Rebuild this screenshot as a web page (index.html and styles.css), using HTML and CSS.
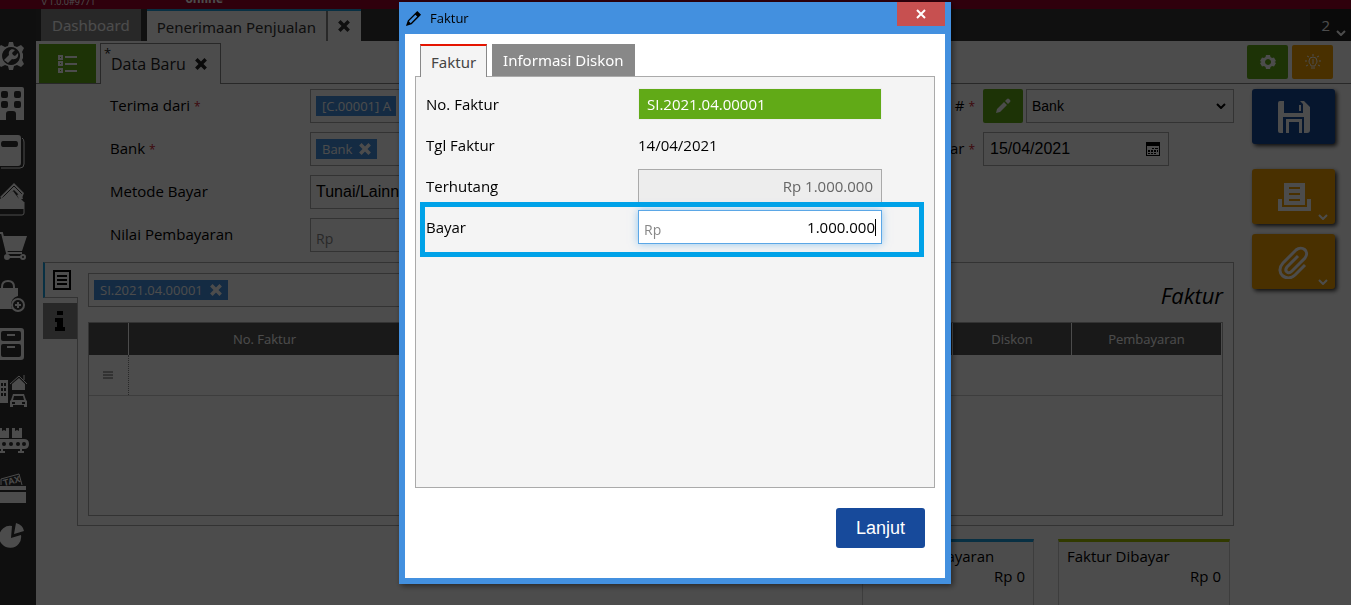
FILE: index.html
```html
<!DOCTYPE html>
<html lang="id">
<head>
    <meta charset="UTF-8">
    <meta name="viewport" content="width=device-width, initial-scale=1.0">
    <title>Penerimaan Penjualan</title>
    <link rel="stylesheet" href="styles.css">
</head>
<body>
    <div class="app">
        <header class="topbar">
            <span class="version">v 1.0.0#9771</span>
            <span class="status">online</span>
        </header>

        <div class="workspace">
            <nav class="sidebar">
                <a href="#" aria-label="Pengaturan"><svg viewBox="0 0 36 48"><path fill-rule="evenodd" d="M9 10h4l1 4 3 1 4-2 3 3-2 4 1 2v4l-1 2 2 4-3 3-4-2-3 1-1 4H9l-1-4-3-1-4 2-3-3 2-4-1-2v-4l1-2-2-4 3-3 4 2 3-1zM11 15a9 9 0 1 0 .1 0z"/><path d="M4 28l5-5c-1-4 2-7 6-5l-3 3 1 2 2 1 3-3c1 4-2 7-6 6l-4 4z"/></svg></a>
                <a href="#" aria-label="Perusahaan"><svg viewBox="0 0 36 48"><path fill-rule="evenodd" d="M-4 7h26q2 0 2 2v31h-8v-6q0-3-3-3H9q-3 0-3 3v6H-4zM3 11q-2 0-2 2v3q0 2 2 2h3q2 0 2-2v-3q0-2-2-2zm13 0q-2 0-2 2v3q0 2 2 2h3q2 0 2-2v-3q0-2-2-2zM3 21q-2 0-2 2v3q0 2 2 2h3q2 0 2-2v-3q0-2-2-2zm13 0q-2 0-2 2v3q0 2 2 2h3q2 0 2-2v-3q0-2-2-2z"/></svg></a>
                <a href="#" aria-label="Buku Besar"><svg viewBox="0 0 36 48"><path fill-rule="evenodd" d="M-3 7h21q3 0 3 3v25q0 3-3 3H-3zM3 13q-2 0-2 3t2 3h13q2 0 2-3t-2-3z"/><path class="line thin" d="M22 10q2 1 2 4v22q0 4-4 4H1"/></svg></a>
                <a href="#" aria-label="Kas dan Bank"><svg viewBox="0 0 36 48"><path d="M0 21L14 7l10 10-2 5-8-8-11 9z"/><path class="line cut" d="M2 22L14 10l8 8"/><path d="M0 23l13-8 6 8zM17 19l4-2 2 6h-4zM-2 23h23l3 3v7H-2z"/><path class="line thin" d="M-2 39h24q2 0 2-2V26"/></svg></a>
                <a href="#" aria-label="Penjualan"><svg viewBox="0 0 36 48"><path d="M3 12h24l-5 15H6z"/><path class="line" d="M-2 9h4l5 20h15M5 33h16"/><circle class="line" cx="7" cy="33" r="2"/><circle class="line" cx="23" cy="33" r="2"/></svg></a>
                <a href="#" aria-label="Pembelian"><svg viewBox="0 0 36 48"><path d="M-3 16h21v8q-7 2-7 9 0 2 1 4H-3z"/><path class="line" d="M2 18v-3q0-6 6-6t6 6v3"/><circle class="line" cx="18" cy="33" r="6"/><path class="line" d="M18 30v6M15 33h6"/></svg></a>
                <a href="#" aria-label="Persediaan"><svg viewBox="0 0 36 48"><path fill-rule="evenodd" d="M-3 8h24q3 0 3 3v26q0 3-3 3H-3zM3 11q-2 0-2 2v6q0 2 2 2h16q2 0 2-2v-6q0-2-2-2zM3 24q-2 0-2 2v9q0 2 2 2h16q2 0 2-2v-9q0-2-2-2z"/><path d="M7 14h8v2H7zM7 26h8v2H7z"/></svg></a>
                <a href="#" aria-label="Aset Tetap"><svg viewBox="0 0 36 48"><path fill-rule="evenodd" d="M-2 12h10v23H-2zM1 15v3h2v-3zm3 0v3h2v-3zm-3 5v3h2v-3zm3 0v3h2v-3zm-3 5v3h2v-3zm3 0v3h2v-3z"/><path class="line thin" d="M10 16l9-8 8 8M24 12V7"/><path d="M12 16l7-6 6 6v6H12z"/><path fill-rule="evenodd" d="M13 26h11l2 6 1 1v6h-3v-2H13v2h-3v-6l1-1zM14 28l-1 4h11l-1-4zM12 34v2h3v-2zm10 0v2h3v-2z"/></svg></a>
                <a href="#" aria-label="Manufaktur"><svg viewBox="0 0 36 48"><path d="M-2 12h4v3l2-1 2 1v-3h3v10H-2zM12 12h3v3l2-1 2 1v-3h3v10H12zM0 23h24q5 0 5 5t-5 5H0z"/><g class="hole"><circle cx="4" cy="28" r="2"/><circle cx="11" cy="28" r="2"/><circle cx="18" cy="28" r="2"/><circle cx="24" cy="28" r="2"/></g><path d="M1 33h2v3H1zM20 33h2v3h-2zM-1 35h6v2h-6zM18 35h6v2h-6z"/></svg></a>
                <a href="#" aria-label="Pajak"><svg viewBox="0 0 36 48"><path class="line thin" d="M1 21v-6L19 10l3 11"/><text class="tax" x="4" y="22" transform="rotate(-14 4 22)">TAX</text><path d="M0 22h26v4H0zM0 28h26v11H0z"/></svg></a>
                <a href="#" aria-label="Laporan"><svg viewBox="0 0 36 48"><path d="M12 14l-1 12 10-3a11 11 0 1 1-9-9zM16 11q7 2 8 8l-10 3z"/></svg></a>
            </nav>

            <main class="main">
                <div class="tab-strip">
                    <a class="page-tab" href="#">Dashboard</a>
                    <div class="page-tab active">
                        <a href="#">Penerimaan Penjualan</a>
                        <button class="tab-close" aria-label="Tutup tab"><svg class="cross" viewBox="0 0 12 12"><path d="M2 2l8 8M10 2l-8 8"/></svg></button>
                    </div>
                    <button class="tab-count">2 <svg viewBox="0 0 10 6"><path d="M1 1l4 4 4-4"/></svg></button>
                </div>

                <div class="doc-bar">
                    <button class="btn-list" aria-label="Daftar"><svg viewBox="0 0 20 20"><path d="M1 2h3v3H1zM1 8h3v3H1zM1 15h3v3H1zM7 3h12M7 10h12M7 17h12"/></svg></button>
                    <div class="doc-tab">
                        <span class="dirty">*</span>Data Baru
                        <button aria-label="Tutup data"><svg class="cross" viewBox="0 0 12 12"><path d="M2 2l8 8M10 2l-8 8"/></svg></button>
                    </div>
                    <div class="doc-tools">
                        <button class="btn-green" aria-label="Setelan"><svg viewBox="0 0 16 16"><path fill-rule="evenodd" d="M6 1h4l.5 2 1.500 1 2-.5 2 3.500-1.500 1 1.500 1-2 3.500-2-.5-1.500 1-.5 2H6l-.5-2L4 12l-2 .5L0 9l1.500-1L0 7l2-3.500L4 4l1.500-1zM8 5a3 3 0 1 0 .1 0z"/></svg></button>
                        <button class="btn-orange" aria-label="Petunjuk"><svg class="bulb" viewBox="0 0 16 16"><path d="M6 12c0-2-2-2-2-5a4 4 0 0 1 8 0c0 3-2 3-2 5zM6 14h4M8 5v5M8 0v2M0 7h2M14 7h2M2 2l2 1M14 2l-2 1M1 12l2-1M15 12l-2-1"/></svg></button>
                    </div>
                </div>

                <div class="content">
                    <div class="document">
                        <form class="form">
                            <div class="form-col form-left">
                                <span class="label">Terima dari <i>*</i></span>
                                <div class="field"><span class="chip">[C.00001] A</span></div>
                                <span class="label">Bank <i>*</i></span>
                                <div class="field"><span class="chip">Bank <svg class="cross" viewBox="0 0 12 12"><path d="M2 2l8 8M10 2l-8 8"/></svg></span></div>
                                <label class="label" for="metode">Metode Bayar</label>
                                <select class="field plain" id="metode"><option>Tunai/Lainnya</option></select>
                                <label class="label" for="nilai">Nilai Pembayaran</label>
                                <input class="field amount" id="nilai" type="text" placeholder="Rp">
                            </div>
                            <div class="form-col form-right">
                                <label class="label" for="nomor">No. Bukti # <i>*</i></label>
                                <div class="number">
                                    <button class="btn-green" type="button" aria-label="Ubah nomor"><svg viewBox="0 0 16 16"><path d="M1 15l1-4 7-7 3 3-7 7zM10 3l2-2q1-1 2 0l1 1q1 1 0 2l-2 2z"/></svg></button>
                                    <div class="select-wrap">
                                        <select class="field" id="nomor"><option>Bank</option></select>
                                        <svg viewBox="0 0 10 6"><path d="M1 1l4 4 4-4"/></svg>
                                    </div>
                                </div>
                                <label class="label" for="tanggal">Tgl Bayar <i>*</i></label>
                                <div class="field date">
                                    <input id="tanggal" type="text" value="15/04/2021">
                                    <svg viewBox="0 0 14 14"><path fill-rule="evenodd" d="M0 0h14v14H0zM1 4v9h12V4z"/><path d="M6 6h2v1H6zM9 6h3v1H9zM2 8h2v2H2zM5 8h2v2H5zM8 8h2v2H8zM11 8h1v2h-1zM2 11h2v1H2zM5 11h2v1H5zM8 11h2v1H8z"/></svg>
                                </div>
                            </div>
                        </form>

                        <div class="detail">
                            <div class="side-tabs">
                                <button class="side-tab active" aria-label="Rincian"><svg viewBox="0 0 18 20"><path d="M1 1h16v18H1zM4 6h10M4 10h10M4 14h10"/></svg></button>
                                <button class="side-tab" aria-label="Info"><svg class="info" viewBox="0 0 10 20"><path d="M2 0h6v4H2zM0 7h8v9h2v4H0v-4h2v-5H0z"/></svg></button>
                            </div>
                            <section class="panel">
                                <div class="panel-head">
                                    <div class="field"><span class="chip">SI.2021.04.00001 <svg class="cross" viewBox="0 0 12 12"><path d="M2 2l8 8M10 2l-8 8"/></svg></span></div>
                                    <h2>Faktur</h2>
                                </div>
                                <div class="table-box">
                                    <table>
                                        <thead>
                                            <tr><th class="col-grip"></th><th class="col-no">No. Faktur</th><th>Terhutang</th><th class="col-disc">Diskon</th><th class="col-pay">Pembayaran</th></tr>
                                        </thead>
                                        <tbody>
                                            <tr><td><svg class="grip" viewBox="0 0 10 8"><path d="M0 1h10M0 4h10M0 7h10"/></svg></td><td></td><td></td><td></td><td></td></tr>
                                        </tbody>
                                    </table>
                                </div>
                            </section>
                        </div>

                        <div class="totals">
                            <div class="total-card"><span>Nilai Pembayaran</span><b>Rp 0</b></div>
                            <div class="total-card paid"><span>Faktur Dibayar</span><b>Rp 0</b></div>
                        </div>
                    </div>

                    <aside class="actions">
                        <button class="action save" aria-label="Simpan"><svg viewBox="0 0 34 34"><path fill-rule="evenodd" d="M3 1h24l6 6v23q0 3-3 3H3q-2 0-2-2V3q0-2 2-2zM7 1v12h19V4l-3-3zM6 17v16h21V17z"/><path d="M22 5h2v6h-2zM9 19h16v14h-3V22H12v11H9z"/></svg></button>
                        <button class="action" aria-label="Cetak"><svg viewBox="0 0 34 34"><path fill-rule="evenodd" d="M7 3h21v22H7zM12 7v2h11V7zm0 6v2h11v-2zm0 6v2h11v-2zM1 19h4v8h25v-8h4v12H1z"/></svg><svg class="more" viewBox="0 0 10 6"><path d="M1 1l4 4 4-4"/></svg></button>
                        <button class="action" aria-label="Lampiran"><svg class="clip" viewBox="0 0 34 34"><path d="M21 11L10 22c-3 4 1 8 5 4l13-13c5-7-3-13-9-8L6 18c-9 10 4 20 12 12l10-10"/></svg><svg class="more" viewBox="0 0 10 6"><path d="M1 1l4 4 4-4"/></svg></button>
                    </aside>
                </div>
            </main>
        </div>
    </div>

    <div class="overlay">
        <div class="dialog" role="dialog" aria-labelledby="dialog-title">
            <div class="dialog-head">
                <svg viewBox="0 0 18 18"><path fill-rule="evenodd" d="M1 17l2-6 10-10 4 4-10 10zM4 12l2 2 7-7-2-2z"/></svg>
                <span id="dialog-title">Faktur</span>
                <button class="dialog-close" aria-label="Tutup"><svg viewBox="0 0 12 12"><path d="M2 2l8 8M10 2l-8 8"/></svg></button>
            </div>
            <div class="dialog-body">
                <div class="dialog-tabs">
                    <button class="active">Faktur</button>
                    <button>Informasi Diskon</button>
                </div>
                <div class="dialog-panel">
                    <div class="row"><span>No. Faktur</span><a class="invoice" href="#">SI.2021.04.00001</a></div>
                    <div class="row"><span>Tgl Faktur</span><span>14/04/2021</span></div>
                    <div class="row"><label for="terhutang">Terhutang</label><input id="terhutang" type="text" value="Rp 1.000.000" disabled></div>
                    <div class="row focus-row">
                        <label for="bayar">Bayar</label>
                        <div class="money"><span>Rp</span><input id="bayar" type="text" value="1.000.000"><i class="caret"></i></div>
                        <div class="highlight"></div>
                    </div>
                </div>
                <div class="dialog-foot"><button class="btn-next">Lanjut</button></div>
            </div>
        </div>
    </div>
</body>
</html>
```

FILE: styles.css
```css
* {
    margin: 0;
    padding: 0;
    box-sizing: border-box;
}

body {
    height: 100vh;
    overflow: hidden;
    background-color: #fff;
    color: #000;
    font-family: "Open Sans", "Noto Sans", sans-serif;
    font-size: 15px;
    line-height: 20px;
}

button, input, select {
    font: inherit;
    color: inherit;
    border: none;
    border-radius: 0;
    background: none;
    outline: none;
}

select {
    appearance: none;
}

a {
    color: inherit;
    text-decoration: none;
}

svg {
    display: block;
    fill: currentColor;
}

.app {
    height: 100vh;
    display: flex;
    flex-direction: column;
    overflow: hidden;
}

.topbar {
    flex: none;
    height: 9px;
    display: flex;
    align-items: flex-end;
    gap: 90px;
    padding-left: 42px;
    overflow: hidden;
    background-color: #9d0028;
    color: #fff;
    font-size: 9px;
    line-height: 14px;
}

.status {
    font-size: 12px;
    font-weight: bold;
    line-height: 20px;
}

.workspace {
    flex: 1;
    display: flex;
    min-height: 0;
}

.sidebar {
    flex: none;
    width: 36px;
    padding-top: 23px;
    overflow: hidden;
    background-color: #333;
    color: #fff;
}

.sidebar svg {
    width: 36px;
    height: 48px;
}

.sidebar .line {
    fill: none;
    stroke: currentColor;
    stroke-width: 2;
}

.sidebar .thin {
    stroke-width: 1;
}

.sidebar .cut {
    stroke: #333;
    stroke-width: 1;
}

.sidebar .hole {
    fill: #333;
}

.sidebar .tax {
    font-family: "Liberation Sans", Arial, sans-serif;
    font-size: 9px;
    font-weight: bold;
}

.main {
    flex: 1;
    min-width: 0;
}

/* tabs */
.tab-strip {
    display: flex;
    height: 32px;
    padding-left: 5px;
    gap: 6px;
    background-color: #363636;
}

.page-tab {
    padding: 0 11px;
    font-family: "Noto Sans", sans-serif;
    line-height: 32px;
    background-color: #888;
    color: #fff;
}

.page-tab.active {
    display: flex;
    padding: 0;
    border-top: 2px solid #1ba1e2;
    background-color: #fff;
    color: #333;
}

.page-tab.active a {
    padding: 0 10px;
    border-right: 2px solid #888;
}

.tab-close {
    width: 33px;
    display: grid;
    place-items: center;
}

.cross {
    width: 14px;
    height: 14px;
    fill: none;
    stroke: currentColor;
    stroke-width: 3;
}

.tab-count {
    display: flex;
    align-items: center;
    justify-content: flex-end;
    gap: 6px;
    width: 41px;
    margin-left: auto;
    padding-right: 5px;
    background-color: #222;
    color: #fff;
}

.tab-count svg, .more {
    width: 10px;
    height: 6px;
    fill: none;
    stroke: currentColor;
    stroke-width: 2;
}

.tab-count svg {
    margin-top: 16px;
}

.doc-bar {
    display: flex;
    height: 43px;
    padding: 2px 18px 0 3px;
    border-bottom: 1px solid #888;
}

.btn-list {
    width: 57px;
    margin-top: 1px;
    display: grid;
    place-items: center;
    background-color: #61aa17;
    color: #fff;
}

.btn-list svg {
    width: 20px;
    height: 20px;
    fill: none;
    stroke: currentColor;
    stroke-width: 2;
}

.doc-tab {
    display: flex;
    align-items: center;
    gap: 8px;
    height: 41px;
    margin-left: 4px;
    padding: 0 12px 0 10px;
    position: relative;
    border: 1px solid #888;
    border-bottom: none;
    background-color: #fff;
    color: #222;
    font-size: 16px;
}

.dirty {
    position: absolute;
    left: 3px;
    top: 2px;
    font-size: 13px;
    line-height: 14px;
}

.doc-tools {
    display: flex;
    gap: 4px;
    margin: 2px 0 4px auto;
}

.doc-tools button {
    width: 41px;
}

.btn-green, .btn-orange {
    display: grid;
    place-items: center;
    border-radius: 2px;
    background-color: #61aa17;
    color: #fff;
}

.btn-orange {
    background-color: #f5a200;
}

.btn-green svg, .btn-orange svg {
    width: 16px;
    height: 16px;
}

.btn-orange .bulb {
    fill: none;
    stroke: currentColor;
}

/* document */
.content {
    display: flex;
    gap: 18px;
    padding: 5px 16px 0 0;
}

.document {
    flex: 1;
    min-width: 0;
}

.form {
    display: flex;
    justify-content: space-between;
    padding-left: 74px;
}

.form-col {
    display: grid;
    grid-auto-rows: 34px;
    gap: 9px 0;
    align-content: start;
}

.form-left {
    grid-template-columns: 200px 280px;
}

.form-right {
    grid-template-columns: auto 251px;
    column-gap: 8px;
}

.label {
    line-height: 33px;
}

.form-right .label {
    text-align: right;
}

.label i {
    color: #d02030;
    font-style: normal;
    font-size: 12px;
}

.field {
    display: flex;
    align-items: center;
    height: 34px;
    padding: 0 5px;
    border: 1px solid #aaa;
}

.chip {
    display: flex;
    align-items: center;
    gap: 6px;
    height: 20px;
    padding: 0 5px 0 6px;
    background-color: #4390df;
    color: #fff;
    font-size: 13px;
}

.field.plain {
    font-family: "Liberation Sans", Arial, sans-serif;
    font-size: 16px;
}

.amount {
    padding-top: 6px;
    font-size: 14px;
}

.amount::placeholder {
    color: #888;
}

.number {
    display: flex;
    gap: 3px;
}

.number .btn-green {
    width: 40px;
}

.select-wrap {
    flex: 1;
    position: relative;
}

.select-wrap select {
    width: 100%;
    font-family: "Liberation Sans", Arial, sans-serif;
    font-size: 14px;
}

.select-wrap svg {
    position: absolute;
    right: 8px;
    top: 14px;
    width: 10px;
    height: 6px;
    fill: none;
    stroke: currentColor;
    stroke-width: 2;
}

.date {
    width: 186px;
    padding: 0 8px 0 6px;
}

.date input {
    flex: 1;
    min-width: 0;
    font-family: "Liberation Sans", Arial, sans-serif;
    font-size: 16px;
}

.date svg {
    width: 14px;
    height: 14px;
}

.detail {
    display: flex;
    margin-top: 10px;
    padding-left: 7px;
}

.side-tabs {
    width: 34px;
    display: flex;
    flex-direction: column;
    gap: 5px;
}

.side-tab {
    height: 36px;
    display: grid;
    place-items: center;
    background-color: #888;
}

.side-tab.active {
    position: relative;
    margin-right: -1px;
    border: 1px solid #aaa;
    border-left: 2px solid #1ba1e2;
    border-right: none;
    background-color: #fff;
}

.side-tab svg {
    width: 18px;
    height: 20px;
    fill: none;
    stroke: currentColor;
    stroke-width: 2;
}

.side-tab .info {
    width: 10px;
    fill: currentColor;
    stroke: none;
}

.panel {
    flex: 1;
    height: 264px;
    padding: 10px;
    border: 1px solid #aaa;
}

.panel-head {
    display: flex;
    justify-content: space-between;
}

.panel-head .field {
    width: 60%;
}

.panel-head h2 {
    font-size: 22px;
    font-style: italic;
    font-weight: normal;
    line-height: 44px;
}

.table-box {
    height: 194px;
    margin-top: 5px;
    border: 1px solid #aaa;
}

table {
    width: 100%;
    table-layout: fixed;
    border-collapse: collapse;
    font-size: 13px;
}

th {
    height: 32px;
    border-right: 1px solid #fff;
    background-color: #555;
    color: #fff;
    font-weight: normal;
}

td {
    height: 40px;
    border-bottom: 1px solid #ccc;
}

td:first-child {
    border-right: 1px dotted #888;
}

.col-grip {
    width: 39px;
}

.col-no {
    width: 273px;
}

.col-disc {
    width: 119px;
}

.col-pay {
    width: 150px;
}

.grip {
    width: 10px;
    height: 8px;
    margin: 0 auto;
    stroke: #555;
}

.totals {
    display: flex;
    justify-content: flex-end;
    gap: 24px;
    margin-top: 13px;
    padding-right: 4px;
}

.total-card {
    width: 172px;
    height: 84px;
    padding: 4px 8px;
    border: 1px solid #ccc;
    border-top: 3px solid #1ba1e2;
}

.total-card.paid {
    border-top-color: #a4c400;
}

.total-card span, .total-card b {
    display: block;
    font-weight: normal;
}

.total-card b {
    text-align: right;
}

.actions {
    width: 83px;
    display: flex;
    flex-direction: column;
    gap: 10px;
}

.action {
    position: relative;
    height: 55px;
    display: grid;
    place-items: center;
    border-radius: 3px;
    background-color: #f5a200;
    box-shadow: 2px 2px 4px rgba(0, 0, 0, 0.8);
    color: #fff;
}

.action.save {
    margin-bottom: 15px;
    background-color: #174a9b;
}

.action svg {
    width: 34px;
    height: 34px;
}

.action .clip {
    fill: none;
    stroke: currentColor;
    stroke-width: 3;
}

.action .more {
    position: absolute;
    right: 7px;
    bottom: 4px;
    width: 10px;
    height: 6px;
}

/* dialog */
.overlay {
    position: fixed;
    inset: 0;
    padding: 2px 1px 0 0;
    background-color: rgba(0, 0, 0, 0.7);
}

.dialog {
    width: 552px;
    margin: 0 auto;
    border: 6px solid #4390df;
    border-top: none;
    background-color: #fff;
    box-shadow: 2px 2px 6px rgba(0, 0, 0, 0.5);
}

.dialog-head {
    display: flex;
    align-items: center;
    gap: 8px;
    height: 32px;
    background-color: #4390df;
    font-size: 13px;
}

.dialog-head > svg {
    width: 17px;
    height: 17px;
}

.dialog-close {
    align-self: flex-start;
    width: 48px;
    height: 24px;
    margin-left: auto;
    display: grid;
    place-items: center;
    background-color: #c75050;
    color: #fff;
}

.dialog-close svg {
    width: 12px;
    height: 12px;
    stroke: currentColor;
    stroke-width: 2;
}

.dialog-body {
    padding: 10px 10px 30px;
}

.dialog-tabs {
    display: flex;
    gap: 5px;
    padding-left: 5px;
}

.dialog-tabs button {
    height: 32px;
    padding: 0 11px;
    background-color: #888;
    color: #fff;
    font-family: "Noto Sans", sans-serif;
}

.dialog-tabs .active {
    position: relative;
    height: 33px;
    margin-bottom: -1px;
    padding: 0 10px;
    border: 1px solid #888;
    border-top: 2px solid #e51400;
    border-bottom: none;
    background-color: #f4f4f4;
    color: #444;
}

.dialog-panel {
    display: flex;
    flex-direction: column;
    gap: 7px;
    height: 412px;
    padding: 10px;
    border: 1px solid #aaa;
    background-color: #f4f4f4;
}

.row {
    display: grid;
    grid-template-columns: 212px 244px;
    align-items: center;
    height: 34px;
}

.row input {
    height: 34px;
    padding: 0 8px;
    text-align: right;
}

.row input:disabled {
    border: 1px solid #aaa;
    background-color: #ededed;
    color: #666;
}

.invoice {
    height: 32px;
    padding: 0 8px;
    border: 1px solid #eee;
    background-color: #61aa17;
    color: #fff;
    line-height: 30px;
}

.focus-row {
    position: relative;
}

.money {
    display: flex;
    align-items: center;
    height: 34px;
    padding: 0 5px;
    border: 1px solid #5ba7e6;
    background-color: #fff;
    box-shadow: 0 0 8px rgba(82, 168, 236, 0.6);
}

.money span {
    padding-top: 6px;
    color: #888;
    font-size: 14px;
}

.money input {
    flex: 1;
    min-width: 0;
    padding: 0;
}

.caret {
    width: 1px;
    height: 17px;
    background-color: #000;
}

.highlight {
    position: absolute;
    left: -6px;
    top: -8px;
    width: 504px;
    height: 55px;
    border: 5px solid #00a2e8;
    pointer-events: none;
}

.dialog-foot {
    margin-top: 20px;
    padding-right: 10px;
    text-align: right;
}

.btn-next {
    height: 40px;
    padding: 0 20px;
    border-radius: 3px;
    background-color: #174a9b;
    color: #fff;
    font-family: "Liberation Sans", Arial, sans-serif;
    font-size: 18px;
}
```
